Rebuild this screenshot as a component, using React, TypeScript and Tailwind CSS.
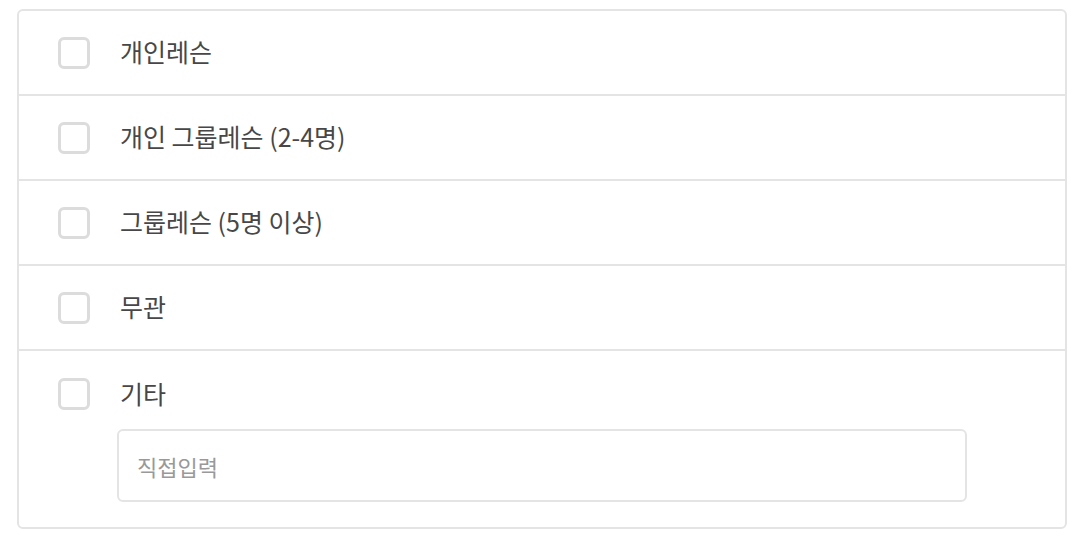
import { useState } from "react";

const options = [
  "개인레슨",
  "개인 그룹레슨 (2-4명)",
  "그룹레슨 (5명 이상)",
  "무관",
];

function Box({ checked, onClick }: { checked: boolean; onClick: () => void }) {
  return (
    <button
      type="button"
      onClick={onClick}
      className={`w-[32px] h-[32px] shrink-0 rounded-[6px] border-[3px] ${
        checked ? "border-[#888] bg-[#888]" : "border-[#dcdcdc] bg-white"
      }`}
    />
  );
}

export default function App() {
  const [checked, setChecked] = useState<string[]>([]);
  const toggle = (v: string) =>
    setChecked((c) => (c.includes(v) ? c.filter((x) => x !== v) : [...c, v]));

  return (
    <div className="min-h-screen bg-white pt-[9px] pl-[17px] font-['Noto_Sans_CJK_KR','Noto_Sans',sans-serif]">
      <div className="w-[1050px] border-2 border-[#e4e4e4] rounded-[6px] bg-white">
        {options.map((o) => (
          <div
            key={o}
            className="h-[85px] flex items-center pl-[39px] border-b-2 border-[#e4e4e4]"
          >
            <Box checked={checked.includes(o)} onClick={() => toggle(o)} />
            <span className="ml-[30px] -mt-[2px] text-[25px] leading-none text-[#474747]">{o}</span>
          </div>
        ))}
        <div className="pl-[39px] pt-[27px] pb-[25px]">
          <div className="flex items-center">
            <Box checked={checked.includes("기타")} onClick={() => toggle("기타")} />
            <span className="ml-[30px] -mt-[2px] text-[25px] leading-none text-[#474747]">기타</span>
          </div>
          <input
            type="text"
            placeholder="직접입력"
            className="block mt-[19px] ml-[59px] w-[850px] h-[73px] border-2 border-[#e4e4e4] rounded-[6px] px-[18px] text-[22px] text-[#444] placeholder:text-[#999] outline-none"
          />
        </div>
      </div>
    </div>
  );
}
